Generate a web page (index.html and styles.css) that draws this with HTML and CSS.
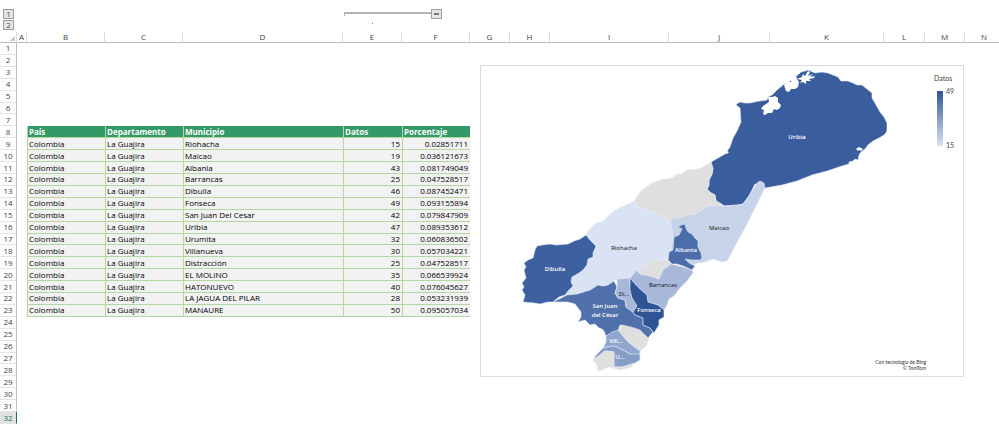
FILE: index.html
```html
<!DOCTYPE html>
<html lang="es">
<head>
  <meta charset="UTF-8" />
  <meta name="viewport" content="width=device-width, initial-scale=1" />
  <title>La Guajira - Datos por municipio</title>
  <link rel="stylesheet" href="styles.css">
</head>
<body>
  <div class="outline">
    <div class="levels">
      <button type="button">1</button>
      <button type="button">2</button>
    </div>
    <div class="bracket"><span class="dot"></span></div>
    <button type="button" class="collapse" aria-label="Contraer grupo"></button>
  </div>

  <main class="sheet">
    <table>
      <colgroup>
        <col class="c-num"><col class="c-a"><col class="c-b"><col class="c-c"><col class="c-d">
        <col class="c-e"><col class="c-f"><col class="c-g"><col class="c-h"><col class="c-i">
        <col class="c-j"><col class="c-k"><col class="c-l"><col class="c-m"><col class="c-n">
      </colgroup>
      <thead>
        <tr>
          <th class="corner"></th><th>A</th><th>B</th><th>C</th><th>D</th><th>E</th><th>F</th><th>G</th>
          <th>H</th><th>I</th><th>J</th><th>K</th><th>L</th><th>M</th><th>N</th>
        </tr>
      </thead>
      <tbody>
        <tr><th>1</th><td colspan="14"></td></tr>
        <tr><th>2</th><td colspan="14"></td></tr>
        <tr><th>3</th><td colspan="14"></td></tr>
        <tr><th>4</th><td colspan="14"></td></tr>
        <tr><th>5</th><td colspan="14"></td></tr>
        <tr><th>6</th><td colspan="14"></td></tr>
        <tr><th>7</th><td colspan="14"></td></tr>
        <tr class="head"><th>8</th><td></td><td>País</td><td>Departamento</td><td>Municipio</td><td>Datos</td><td>Porcentaje</td></tr>
        <tr class="data"><th>9</th><td></td><td>Colombia</td><td>La Guajira</td><td>Riohacha</td><td>15</td><td>0.02851711</td></tr>
        <tr class="data"><th>10</th><td></td><td>Colombia</td><td>La Guajira</td><td>Maicao</td><td>19</td><td>0.036121673</td></tr>
        <tr class="data"><th>11</th><td></td><td>Colombia</td><td>La Guajira</td><td>Albania</td><td>43</td><td>0.081749049</td></tr>
        <tr class="data"><th>12</th><td></td><td>Colombia</td><td>La Guajira</td><td>Barrancas</td><td>25</td><td>0.047528517</td></tr>
        <tr class="data"><th>13</th><td></td><td>Colombia</td><td>La Guajira</td><td>Dibulla</td><td>46</td><td>0.087452471</td></tr>
        <tr class="data"><th>14</th><td></td><td>Colombia</td><td>La Guajira</td><td>Fonseca</td><td>49</td><td>0.093155894</td></tr>
        <tr class="data"><th>15</th><td></td><td>Colombia</td><td>La Guajira</td><td>San Juan Del Cesar</td><td>42</td><td>0.079847909</td></tr>
        <tr class="data"><th>16</th><td></td><td>Colombia</td><td>La Guajira</td><td>Uribia</td><td>47</td><td>0.089353612</td></tr>
        <tr class="data"><th>17</th><td></td><td>Colombia</td><td>La Guajira</td><td>Urumita</td><td>32</td><td>0.060836502</td></tr>
        <tr class="data"><th>18</th><td></td><td>Colombia</td><td>La Guajira</td><td>Villanueva</td><td>30</td><td>0.057034221</td></tr>
        <tr class="data"><th>19</th><td></td><td>Colombia</td><td>La Guajira</td><td>Distracción</td><td>25</td><td>0.047528517</td></tr>
        <tr class="data"><th>20</th><td></td><td>Colombia</td><td>La Guajira</td><td>EL MOLINO</td><td>35</td><td>0.066539924</td></tr>
        <tr class="data"><th>21</th><td></td><td>Colombia</td><td>La Guajira</td><td>HATONUEVO</td><td>40</td><td>0.076045627</td></tr>
        <tr class="data"><th>22</th><td></td><td>Colombia</td><td>La Guajira</td><td>LA JAGUA DEL PILAR</td><td>28</td><td>0.053231939</td></tr>
        <tr class="data"><th>23</th><td></td><td>Colombia</td><td>La Guajira</td><td>MANAURE</td><td>50</td><td>0.095057034</td></tr>
        <tr><th>24</th><td colspan="14"></td></tr>
        <tr><th>25</th><td colspan="14"></td></tr>
        <tr><th>26</th><td colspan="14"></td></tr>
        <tr><th>27</th><td colspan="14"></td></tr>
        <tr><th>28</th><td colspan="14"></td></tr>
        <tr><th>29</th><td colspan="14"></td></tr>
        <tr><th>30</th><td colspan="14"></td></tr>
        <tr><th>31</th><td colspan="14"></td></tr>
        <tr class="selected"><th>32</th><td colspan="14"></td></tr>
      </tbody>
    </table>

    <!-- floating map chart -->
    <figure class="chart">
      <svg viewBox="481 66 482 310" role="img" aria-label="Mapa de La Guajira">
        <defs>
          <linearGradient id="scale" x1="0" y1="0" x2="0" y2="1">
            <stop offset="0" stop-color="#2f5597" />
            <stop offset="1" stop-color="#dae3f3" />
          </linearGradient>
        </defs>
        <g class="regions">
          <!-- Riohacha -->
          <path fill="#dae3f3" d="M586 235L589 230L592 227L596 223L602 222L607 217L613 212L619 208L626 205L634 201L637 207L647 209L652 212L658 213L663 217L670 221L672 228L673 237L673 250L669 252L667 260L658 260L648 263L638 270L630 278L617 279L614 281L608 285L598 285L590 290L577 294L563 296L570 283L572 277L579 273L587 265L588 259L593 253L596 246Z" />
          <!-- Dibulla -->
          <path fill="#3c60a0" d="M537 246L542 245L550 244L556 245L568 244L574 241L580 239L586 235L590 240L596 246L593 253L593 257L588 259L587 265L583 270L579 273L572 277L571 282L573 286L568 291L565 295L559 297L553 302L548 302L540 304L534 303L523 302L525 295L522 290L524 287L522 283L526 278L524 270L526 267L524 263L528 260L533 258L535 250Z" />
          <!-- Uribia -->
          <path fill="#395d9d" d="M736 105L738 103L741 102L744 103L750 103L759 101L767 100L768 97L772 95L777 90L783 85L790 81L797 79L796 76L799 74L801 72L805 71L808 70L815 73L822 72L828 73L833 75L838 77L841 81L848 81L853 83L857 85L862 85L867 89L872 93L872 98L875 103L880 112L884 117L887 123L887 130L886 133L884 135L879 138L873 141L868 145L865 149L861 152L859 155L858 160L855 159L853 161L849 162L849 164L842 166L827 171L812 175L797 181L782 185L765 188L755 184L749 196L743 204L738 205L724 206L720 203L716 201L715 195L711 193L707 189L709 185L709 180L712 174L713 169L711 162L718 158L725 154L730 147L733 138L737 131L741 122L740 108Z" />
          <!-- Manaure -->
          <path fill="#dfdfdf" d="M634 201L640 192L646 187L652 183L660 180L672 178L677 174L682 174L687 170L698 169L705 166L711 162L713 169L712 174L709 180L709 185L707 189L711 193L715 195L716 201L724 206L707 206L700 211L693 215L687 215L680 218L674 217L670 221L663 217L658 213L652 212L647 209L637 207Z" />
          <!-- Maicao -->
          <path fill="#c7d3e9" d="M670 221L674 217L680 218L687 215L693 215L700 211L707 206L724 206L738 205L743 204L749 196L757 183L760 181L764 183L765 188L746 226L727 261L722 262L713 259L705 262L698 263L693 265L670 260L673 237L672 228Z" />
          <!-- Hatonuevo -->
          <path fill="#dfdfdf" d="M638 270L648 263L658 260L667 260L671 264L663 270L659 279L650 276L640 274Z" />
          <!-- Barrancas -->
          <path fill="#a8b8d9" d="M630 278L637 270L640 274L650 276L659 279L663 270L671 264L683 267L692 270L693 273L687 281L680 288L674 296L669 299L667 305L664 310L658 305L648 302L647 295L638 288Z" />
          <!-- Albania -->
          <path fill="#4b6da9" d="M678 227L681 225L685 224L686 228L688 232L692 234L695 238L698 241L698 247L701 253L702 258L700 260L692 260L685 259L689 263L695 266L692 270L683 266L677 264L672 264L668 260L669 252L673 250L674 237L679 235L682 229Z" />
          <!-- San Juan del Cesar -->
          <path fill="#5071ab" d="M553 302L567 295L577 294L590 290L598 285L603 286L608 285L614 281L617 287L615 293L618 298L625 300L626 307L633 312L635 315L643 318L643 325L650 328L653 332L648 338L640 331L620 325L618 331L606 336L604 331L602 329L599 328L595 324L590 325L585 320L578 322L581 317L581 312L578 308L575 304L568 302Z" />
          <!-- Distraccion -->
          <path fill="#a8b8d9" d="M617 279L630 278L630 285L632 298L637 306L633 312L626 307L625 300L618 298L615 293L617 287Z" />
          <!-- Fonseca -->
          <path fill="#2f5597" d="M630 278L636 285L640 289L647 295L648 302L658 305L664 310L664 317L659 320L659 325L657 328L654 333L650 328L643 325L643 318L635 315L633 312L637 306L632 298L630 290Z" />
          <!-- El Molino -->
          <path fill="#dfdfdf" d="M618 331L622 325L631 327L640 330L645 335L649 339L646 346L640 351L633 346L627 341L622 335Z" />
          <!-- Villanueva -->
          <path fill="#90a6cf" d="M606 336L612 332L618 330L622 335L627 341L633 346L640 351L640 354L635 355L630 354L625 351L617 347L612 346L603 348L606 342Z" />
          <!-- Urumita -->
          <path fill="#869dc8" d="M603 348L612 346L617 347L625 351L630 354L640 354L640 360L632 365L622 367L614 367L614 352L605 351L600 355L593 360L596 355Z" />
          <!-- La Jagua del Pilar -->
          <path fill="#dfdfdf" d="M593 360L600 355L605 351L614 352L614 367L622 367L634 363L631 367L624 369L619 370L613 368L608 367L602 370L598 371L597 365Z" />
        </g>
        <g class="water">
          <path d="M768 97L772 97L775 96L778 98L778 102L781 105L780 108L777 110L774 109L772 113L768 113L765 115L763 114L764 110L761 109L763 106L766 104L769 102Z" />
          <path d="M784 85L787 82L791 82L792 79L797 79L799 82L798 87L795 89L791 89L789 92L786 91L785 88Z" />
          <path d="M797 79L802 77L803 74L805 76L808 71L810 72L808 76L813 74L810 77L815 76L814 78L809 79L811 81L806 81L806 84L803 82L800 83L802 80Z" />
          <path d="M856 149L859 147L863 149L861 151L859 150L858 151Z" />
          <path d="M725 153L727 151L729 152L727 154Z" />
        </g>
        <g class="labels">
          <text x="624" y="250">Riohacha</text>
          <text x="719" y="230">Maicao</text>
          <text x="663" y="287">Barrancas</text>
          <text x="624" y="296">Di...</text>
        </g>
        <g class="labels light">
          <text x="797" y="139">Uribia</text>
          <text x="555" y="271">Dibulla</text>
          <text x="686" y="252">Albania</text>
          <text x="605" y="308">San Juan</text>
          <text x="605" y="317">del César</text>
          <text x="649" y="312">Fonseca</text>
          <text x="616" y="343">Vill...</text>
          <text x="620" y="359">U...</text>
        </g>
        <g class="legend">
          <text x="934" y="81">Datos</text>
          <rect x="937" y="91" width="6" height="55" fill="url(#scale)" />
          <text x="946" y="94">49</text>
          <text x="946" y="148">15</text>
        </g>
        <g class="credit">
          <text x="926" y="364">Con tecnología de Bing</text>
          <text x="926" y="370">© TomTom</text>
        </g>
      </svg>
    </figure>
  </main>
</body>
</html>
```

FILE: styles.css
```css
* {
  box-sizing: border-box;
}
body {
  margin: 0;
  background: #fff;
  color: #222;
  font-family: "Open Sans", "Noto Sans", sans-serif;
  font-size: 8px;
  line-height: 10px;
}
button {
  display: block;
  width: 11px;
  height: 10px;
  padding: 0;
  border: 1px solid #9c9ca4;
  background: #e4e4e6;
  color: #555;
  font: inherit;
  line-height: 8px;
}

/* Outline bar */
.outline {
  display: grid;
  grid-template-columns: 344px 87px 11px;
  align-items: start;
  height: 32px;
  padding-top: 9px;
}
.levels {
  display: grid;
  gap: 1px;
  padding-left: 3px;
}
.bracket {
  height: 4px;
  margin-top: 3px;
  border-top: 2px solid #b4b4b8;
  border-left: 1px solid #b4b4b8;
}
.dot {
  display: block;
  width: 1px;
  height: 1px;
  margin: 9px 0 0 27px;
  background: #777;
}
.collapse {
  padding: 0 2px;
}
.collapse::before {
  content: "";
  display: block;
  height: 2px;
  background: #777;
}

/* Sheet */
.sheet {
  position: relative;
  overflow: hidden;
}
table {
  width: calc(100% + 5px);
  height: calc(100vh - 35px);
  table-layout: fixed;
  border-collapse: separate;
  border-spacing: 0;
}
.c-num { width: 17px; }
.c-a { width: 10px; }
.c-b, .c-c { width: 78px; }
.c-d { width: 160px; }
.c-e { width: 59px; }
.c-f { width: 68px; }
.c-g, .c-h, .c-m { width: 40px; }
.c-i { width: 119px; }
.c-j { width: 101px; }
.c-k { width: 114px; }
.c-l { width: 41px; }
th, td {
  padding: 0;
  white-space: nowrap;
}
th {
  color: #444;
  font-weight: 400;
  text-align: center;
}
thead th {
  height: 11px;
  border-right: 1px solid #ddd;
  border-bottom: 1px solid #bbb;
}
tbody th {
  border-right: 1px solid #bbb;
  border-bottom: 1px solid #e4e4e4;
}
.corner {
  background: linear-gradient(135deg, transparent 50%, #ccc 50%) 10px 4px / 5px 5px no-repeat;
}
.selected th {
  background: #e1e1e1;
  border-right: 1px solid #217346;
  color: #217346;
}
.head td:nth-child(n+3),
.data td:nth-child(n+3) {
  padding: 0 2px 0 1px;
  border-left: 1px solid #b5d6a0;
  border-bottom: 1px solid #b5d6a0;
}
.head td:nth-child(n+3) {
  background: #339966;
  color: #fff;
  font-weight: 700;
}
.data td:nth-child(n+3) {
  background: #f2f2f2;
  color: #000;
}
.data td:nth-child(n+6) {
  text-align: right;
}

/* Map chart */
.chart {
  position: absolute;
  top: 33px;
  left: 480px;
  width: 484px;
  margin: 0;
  border: 1px solid #ddd;
  background: #fff;
}
.chart svg {
  display: block;
  width: 100%;
}
.regions path {
  stroke: #e4eaf4;
  stroke-width: 0.6;
  stroke-linejoin: round;
}
.water path {
  fill: #fff;
}
.labels text {
  fill: #111;
  font-size: 6px;
  font-weight: 500;
  text-anchor: middle;
}
.labels.light text {
  fill: #fff;
  font-weight: 600;
}
.legend text {
  fill: #444;
  font-family: Lato, sans-serif;
  font-size: 7px;
}
.credit text {
  fill: #333;
  font-family: Lato, sans-serif;
  font-size: 5px;
  text-anchor: end;
}
```
